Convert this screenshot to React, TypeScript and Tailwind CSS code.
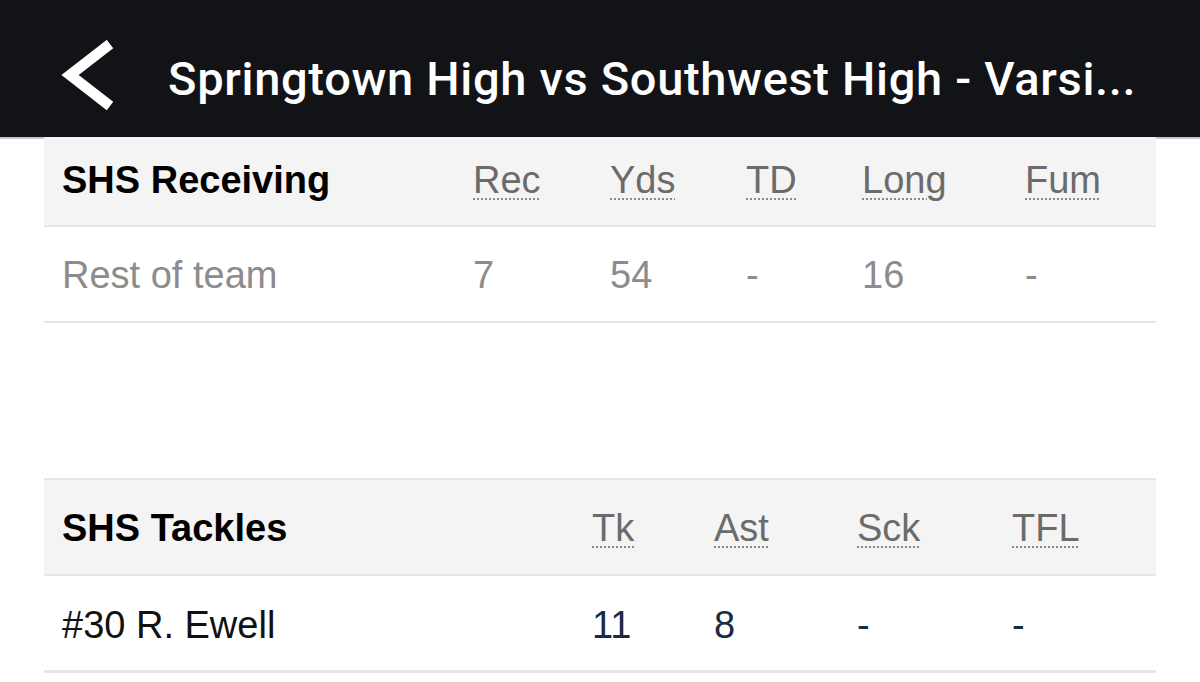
import React from "react";

const H = "font-['Liberation_Sans',Arial,Helvetica,sans-serif]";

function Abbr({ children }: { children: React.ReactNode }) {
  return (
    <span className="underline decoration-dotted decoration-[#8a8a8a] decoration-[2px] underline-offset-[6px]">
      {children}
    </span>
  );
}

export default function App() {
  return (
    <div className={`w-[1200px] h-[682px] overflow-hidden bg-white ${H}`}>
      <div className="h-[137px] bg-[#111317] flex items-center border-b-2 border-[#c8c8c8] box-content">
        <svg width="64" height="74" viewBox="0 0 64 74" className="ml-[56px] mt-[16px]">
          <polyline
            points="54,4 14,35 54,66"
            fill="none"
            stroke="#ffffff"
            strokeWidth="10.5"
            strokeLinejoin="miter"
          />
        </svg>
        <div className="ml-[48px] text-white text-[47px] font-medium font-['Roboto',sans-serif] tracking-[0.68px] whitespace-nowrap leading-none mt-[20px]">
          Springtown High vs Southwest High - Varsi...
        </div>
      </div>

      <div className="mx-[44px] -mt-[2px]">
        {/* Receiving */}
        <div className="bg-[#f4f4f4] h-[90px] border-b-[2px] border-[#e6e6e6] pl-[18px] grid grid-cols-[411px_137px_136px_116px_163px_1fr] items-center pb-[2px] text-[38px]">
          <div className="font-bold text-black">SHS Receiving</div>
          <div className="text-[#6b6b6b]"><Abbr>Rec</Abbr></div>
          <div className="text-[#6b6b6b]"><Abbr>Yds</Abbr></div>
          <div className="text-[#6b6b6b]"><Abbr>TD</Abbr></div>
          <div className="text-[#6b6b6b]"><Abbr>Long</Abbr></div>
          <div className="text-[#6b6b6b]"><Abbr>Fum</Abbr></div>
        </div>
        <div className="h-[96px] border-b-[2px] border-[#e6e6e6] pl-[18px] grid grid-cols-[411px_137px_136px_116px_163px_1fr] items-center pt-[2px] text-[38px] text-[#8c8c8c]">
          <div>Rest of team</div>
          <div>7</div>
          <div>54</div>
          <div>-</div>
          <div>16</div>
          <div>-</div>
        </div>

        <div className="h-[155px]" />

        {/* Tackles */}
        <div className="bg-[#f4f4f4] h-[98px] border-t-[2px] border-b-[2px] border-[#e6e6e6] pl-[18px] grid grid-cols-[530px_122px_143px_155px_1fr] items-center pt-[2px] text-[38px]">
          <div className="font-bold text-black">SHS Tackles</div>
          <div className="text-[#6b6b6b]"><Abbr>Tk</Abbr></div>
          <div className="text-[#6b6b6b]"><Abbr>Ast</Abbr></div>
          <div className="text-[#6b6b6b]"><Abbr>Sck</Abbr></div>
          <div className="text-[#6b6b6b]"><Abbr>TFL</Abbr></div>
        </div>
        <div className="h-[97px] border-b-[3px] border-[#e6e6e6] pl-[18px] grid grid-cols-[530px_122px_143px_155px_1fr] items-center pt-[4px] text-[38px]">
          <div className="text-[#111111]">#30 R. Ewell</div>
          <div className="text-[#1b2a45]">11</div>
          <div className="text-[#1b2a45]">8</div>
          <div className="text-[#1b2a45]">-</div>
          <div className="text-[#1b2a45]">-</div>
        </div>
      </div>
    </div>
  );
}
